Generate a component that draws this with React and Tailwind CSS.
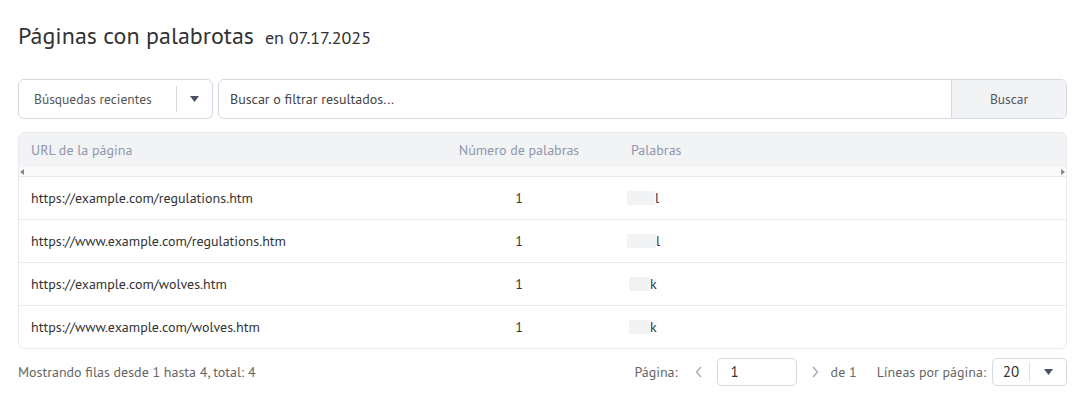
import React from "react";

const rows = [
  { url: "https://example.com/regulations.htm", count: 1, mask: "w-[28px]", tail: "l" },
  { url: "https://www.example.com/regulations.htm", count: 1, mask: "w-[29px]", tail: "l" },
  { url: "https://example.com/wolves.htm", count: 1, mask: "w-[21px] ml-[2px]", tail: "k" },
  { url: "https://www.example.com/wolves.htm", count: 1, mask: "w-[21px] ml-[2px]", tail: "k" },
];

function Caret() {
  return (
    <svg width="9" height="6" viewBox="0 0 9 6" className="fill-[#4a5068]">
      <path d="M0 0h9L4.5 6z" />
    </svg>
  );
}

export default function App() {
  return (
    <div className="bg-white w-[1078px] h-[402px] pl-[18px] pr-[11px] pt-[18px] text-[#333] font-['PT_Sans','Lato',sans-serif]">
      <div className="flex items-baseline gap-[11px] h-[32px]">
        <h1 className="text-[24px] text-[#333]">Páginas con palabrotas</h1>
        <span className="text-[18px] text-[#333]">en 07.17.2025</span>
      </div>

      <div className="flex gap-[5px] mt-[29px] h-[40px]">
        <div className="w-[195px] flex items-center border border-[#d5d8e2] rounded-[6px] bg-white">
          <span className="flex-1 pl-[15px] text-[13.5px] text-[#555]">Búsquedas recientes</span>
          <span className="w-px h-[26px] bg-[#d5d8e2]"></span>
          <span className="w-[35px] flex justify-center"><Caret /></span>
        </div>
        <div className="flex-1 flex border border-[#d5d8e2] rounded-[6px] overflow-hidden">
          <input
            className="flex-1 px-[11px] text-[14px] text-[#333] placeholder:text-[#444] outline-none"
            placeholder="Buscar o filtrar resultados..."
          />
          <button className="w-[115px] bg-[#f2f3f5] border-l border-[#d5d8e2] text-[13.5px] text-[#555]">Buscar</button>
        </div>
      </div>

      <div className="mt-[13px] border border-[#e8eaef] rounded-[6px] overflow-hidden">
        <div className="grid grid-cols-[400px_200px_1fr] h-[34px] items-center bg-[#f2f3f5] text-[14px] text-[#8f97ab]">
          <div className="pl-[12px]">URL de la página</div>
          <div className="text-center">Número de palabras</div>
          <div className="pl-[12px]">Palabras</div>
        </div>
        <div className="h-[10px] bg-[#fafafb] flex items-center justify-between px-[1px] border-b border-[#e8eaef]">
          <svg width="4" height="6" viewBox="0 0 4 6" className="fill-[#888]"><path d="M4 0v6L0 3z" /></svg>
          <svg width="4" height="6" viewBox="0 0 4 6" className="fill-[#888]"><path d="M0 0v6l4-3z" /></svg>
        </div>
        {rows.map((r, i) => (
          <div
            key={i}
            className={"grid grid-cols-[400px_200px_1fr] h-[42px] items-center text-[14px] text-[#333] " + (i > 0 ? "border-t border-[#e8eaef] h-[43px]" : "")}
          >
            <div className="pl-[12px]">{r.url}</div>
            <div className="text-center">{r.count}</div>
            <div className="pl-[8px] flex items-center">
              <span className={"inline-block h-[14px] bg-[#f2f3f5] " + r.mask}></span>
              <span>{r.tail}</span>
            </div>
          </div>
        ))}
      </div>

      <div className="flex items-center justify-between mt-[9px] h-[28px] text-[14px] text-[#666]">
        <span>Mostrando filas desde 1 hasta 4, total: 4</span>
        <div className="flex items-center">
          <span className="text-[14px]">Página:</span>
          <svg width="8" height="12" viewBox="0 0 8 12" className="ml-[17px] stroke-[#aab] fill-none"><path d="M6 1L1.5 6 6 11" strokeWidth="1.4" /></svg>
          <div className="ml-[14px] w-[80px] h-[28px] border border-[#d5d8e2] rounded-[5px] flex items-center pl-[13px] text-[15px] text-[#333]">1</div>
          <svg width="8" height="12" viewBox="0 0 8 12" className="ml-[14px] stroke-[#aab] fill-none"><path d="M2 1l4.5 5L2 11" strokeWidth="1.4" /></svg>
          <span className="ml-[12px]">de 1</span>
          <span className="ml-[20px]">Líneas por página:</span>
          <div className="ml-[6px] w-[75px] h-[28px] border border-[#d5d8e2] rounded-[5px] flex items-center">
            <span className="w-[36px] text-center text-[15px] text-[#333]">20</span>
            <span className="w-px h-[20px] bg-[#e1e3ea]"></span>
            <span className="flex-1 flex justify-center"><Caret /></span>
          </div>
        </div>
      </div>
    </div>
  );
}
